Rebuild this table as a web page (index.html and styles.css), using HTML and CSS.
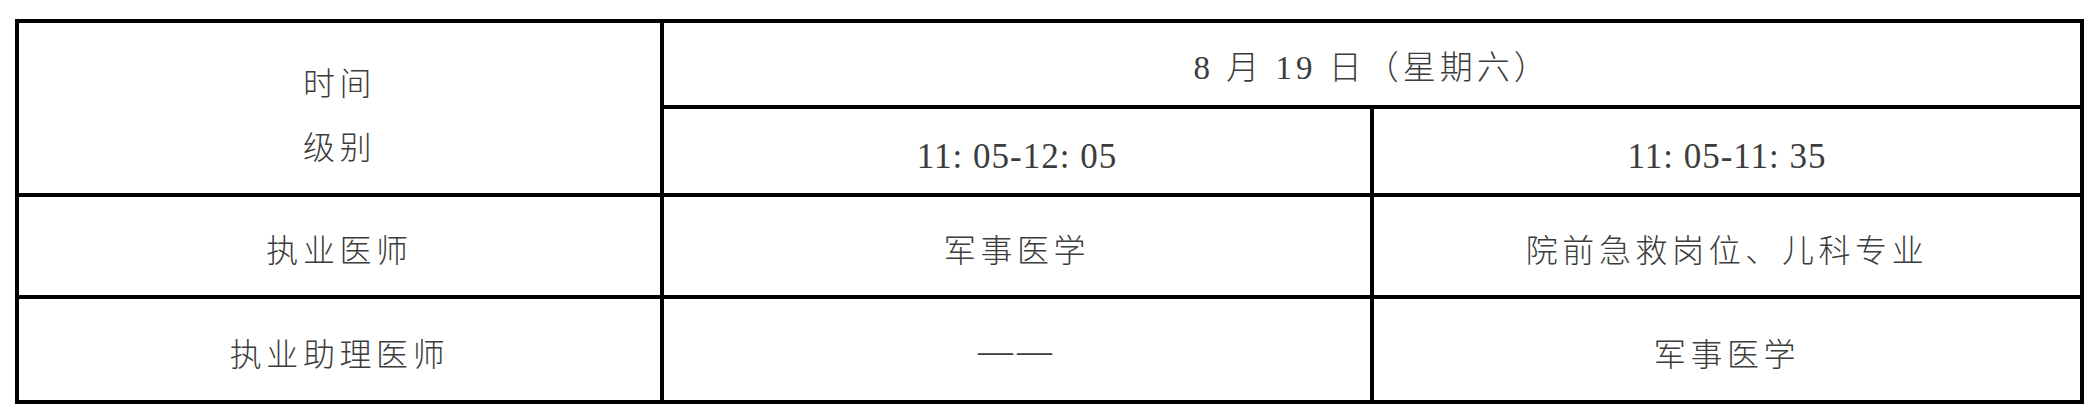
FILE: index.html
```html
<!DOCTYPE html>
<html lang="zh-CN">
<head>
<meta charset="utf-8">
<title>考试时间安排</title>
<link rel="stylesheet" href="styles.css">
</head>
<body>
<div class="page">
  <table class="sched">
    <colgroup>
      <col class="col-a">
      <col class="col-b">
      <col class="col-c">
    </colgroup>
    <tr class="row-h1">
      <td class="cell head" rowspan="2">
        <div class="head-line">时间</div>
        <div class="head-line">级别</div>
      </td>
      <td class="cell date last" colspan="2">8 月 19 日（星期六）</td>
    </tr>
    <tr class="row-h2">
      <td class="cell time">11: 05-12: 05</td>
      <td class="cell time last">11: 05-11: 35</td>
    </tr>
    <tr class="row-3">
      <td class="cell">执业医师</td>
      <td class="cell">军事医学</td>
      <td class="cell last">院前急救岗位、儿科专业</td>
    </tr>
    <tr class="row-4">
      <td class="cell bottom">执业助理医师</td>
      <td class="cell bottom dash">——</td>
      <td class="cell bottom last">军事医学</td>
    </tr>
  </table>
</div>
</body>
</html>
```
FILE: styles.css
```css
html, body {
  margin: 0;
  padding: 0;
  background: #ffffff;
}

.page {
  padding: 19px 0 0 15px;
}

.sched {
  border-collapse: separate;
  border-spacing: 0;
  border: 4px solid #000;
  width: 2069px;
  table-layout: fixed;
  font-family: "Liberation Serif", "Noto Sans CJK SC", serif;
  color: #3c3c3c;
}

.col-a { width: 645px; }
.col-b { width: 710px; }
.col-c { width: 706px; }

.cell {
  box-sizing: border-box;
  border-right: 4px solid #000;
  border-bottom: 4px solid #000;
  padding: 0;
  text-align: center;
  vertical-align: middle;
  font-family: "Noto Sans CJK SC", sans-serif;
  font-weight: 300;
  font-size: 32px;
  letter-spacing: 4.6px;
  line-height: 40px;
  padding-top: 4px;
}

.cell.last { border-right: none; }
.cell.bottom { border-bottom: none; }

.row-h1 { height: 86px; }
.row-h2 { height: 88px; }
.row-3 { height: 102px; }
.row-4 { height: 101px; }

.head {
  padding-top: 10px;
}

.head-line {
  line-height: 64px;
}

.date {
  font-family: "Liberation Serif", "Noto Sans CJK SC", serif;
  font-size: 33px;
  letter-spacing: 4px;
  padding-top: 8px;
}

.time {
  font-family: "Liberation Serif", serif;
  font-size: 35px;
  letter-spacing: 1px;
  padding-top: 12px;
}

.dash {
  font-family: "Liberation Serif", serif;
  font-size: 35px;
  letter-spacing: 4px;
}
```
